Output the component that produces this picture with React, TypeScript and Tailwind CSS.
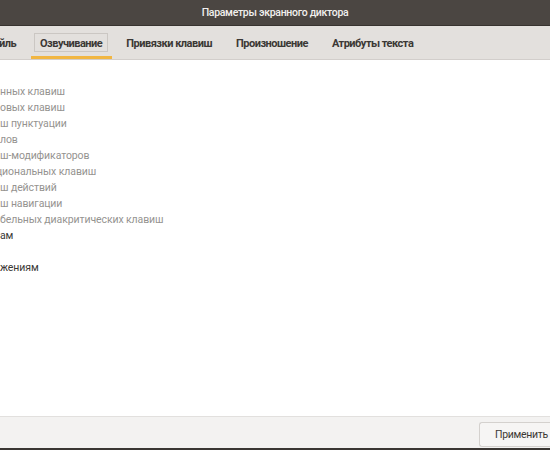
const items: { text: string; dark?: boolean; indent?: string }[] = [
  { text: "нных клавиш" },
  { text: "овых клавиш" },
  { text: "ш пунктуации" },
  { text: "лов" },
  { text: "ш-модификаторов" },
  { text: "циональных клавиш", indent: "-ml-[4px]" },
  { text: "ш действий" },
  { text: "ш навигации" },
  { text: "бельных диакритических клавиш" },
  { text: "ам", dark: true },
  { text: "" },
  { text: "жениям", dark: true },
]

const tabs = ["Привязки клавиш", "Произношение", "Атрибуты текста"]

export default function App() {
  return (
    <div className="w-[550px] h-[450px] flex flex-col bg-white overflow-hidden font-['Roboto',_'Liberation_Sans',_sans-serif]">
      <div className="h-[26px] shrink-0 bg-[#4b4642] border-b border-[#37332f] flex items-center justify-center">
        <span className="text-[10.5px] font-medium text-[#f2f0ee] tracking-[-0.3px]">Параметры экранного диктора</span>
      </div>

      <div className="h-[34px] shrink-0 bg-[#e3e0dd] border-b border-[#d2cecb] flex items-end text-[11px] font-bold text-[#3b3835] tracking-[-0.5px]">
        <div className="h-full flex items-center pt-[4px] -ml-[1px] w-[35px]">йль</div>
        <div className="h-full flex flex-col justify-end">
          <div className="h-[19px] mb-[4px] px-[5px] pt-[3px] border border-[#cbc7c3] flex items-center">Озвучивание</div>
          <div className="h-[3px] -ml-[3px] -mr-[4px] bg-[#f1b642]"></div>
        </div>
        <div className="h-full flex items-center pt-[4px] gap-[24px] ml-[18px]">
          {tabs.map((t) => (
            <span key={t}>{t}</span>
          ))}
        </div>
      </div>

      <div className="flex-1 pt-[24px] text-[10.5px] leading-[16px] tracking-[-0.1px]">
        {items.map((it, i) => (
          <div
            key={i}
            className={`h-[16px] whitespace-nowrap ${it.indent ?? ""} ${it.dark ? "text-[#3a3835]" : "text-[#959390]"}`}
          >
            {it.text}
          </div>
        ))}
      </div>

      <div className="h-[32px] shrink-0 bg-[#f3f2f1] border-t border-[#e2e0de] flex items-start justify-end">
        <button className="mt-[5px] h-[25px] w-[71px] border border-[#d4d1ce] border-r-0 rounded-l-[3px] bg-[#f6f5f4] text-[10.5px] tracking-[-0.3px] text-[#3b3835] pl-[15px] text-left whitespace-nowrap">
          Применить
        </button>
      </div>
      <div className="h-[2px] shrink-0 bg-[#3a3633]"></div>
    </div>
  )
}
